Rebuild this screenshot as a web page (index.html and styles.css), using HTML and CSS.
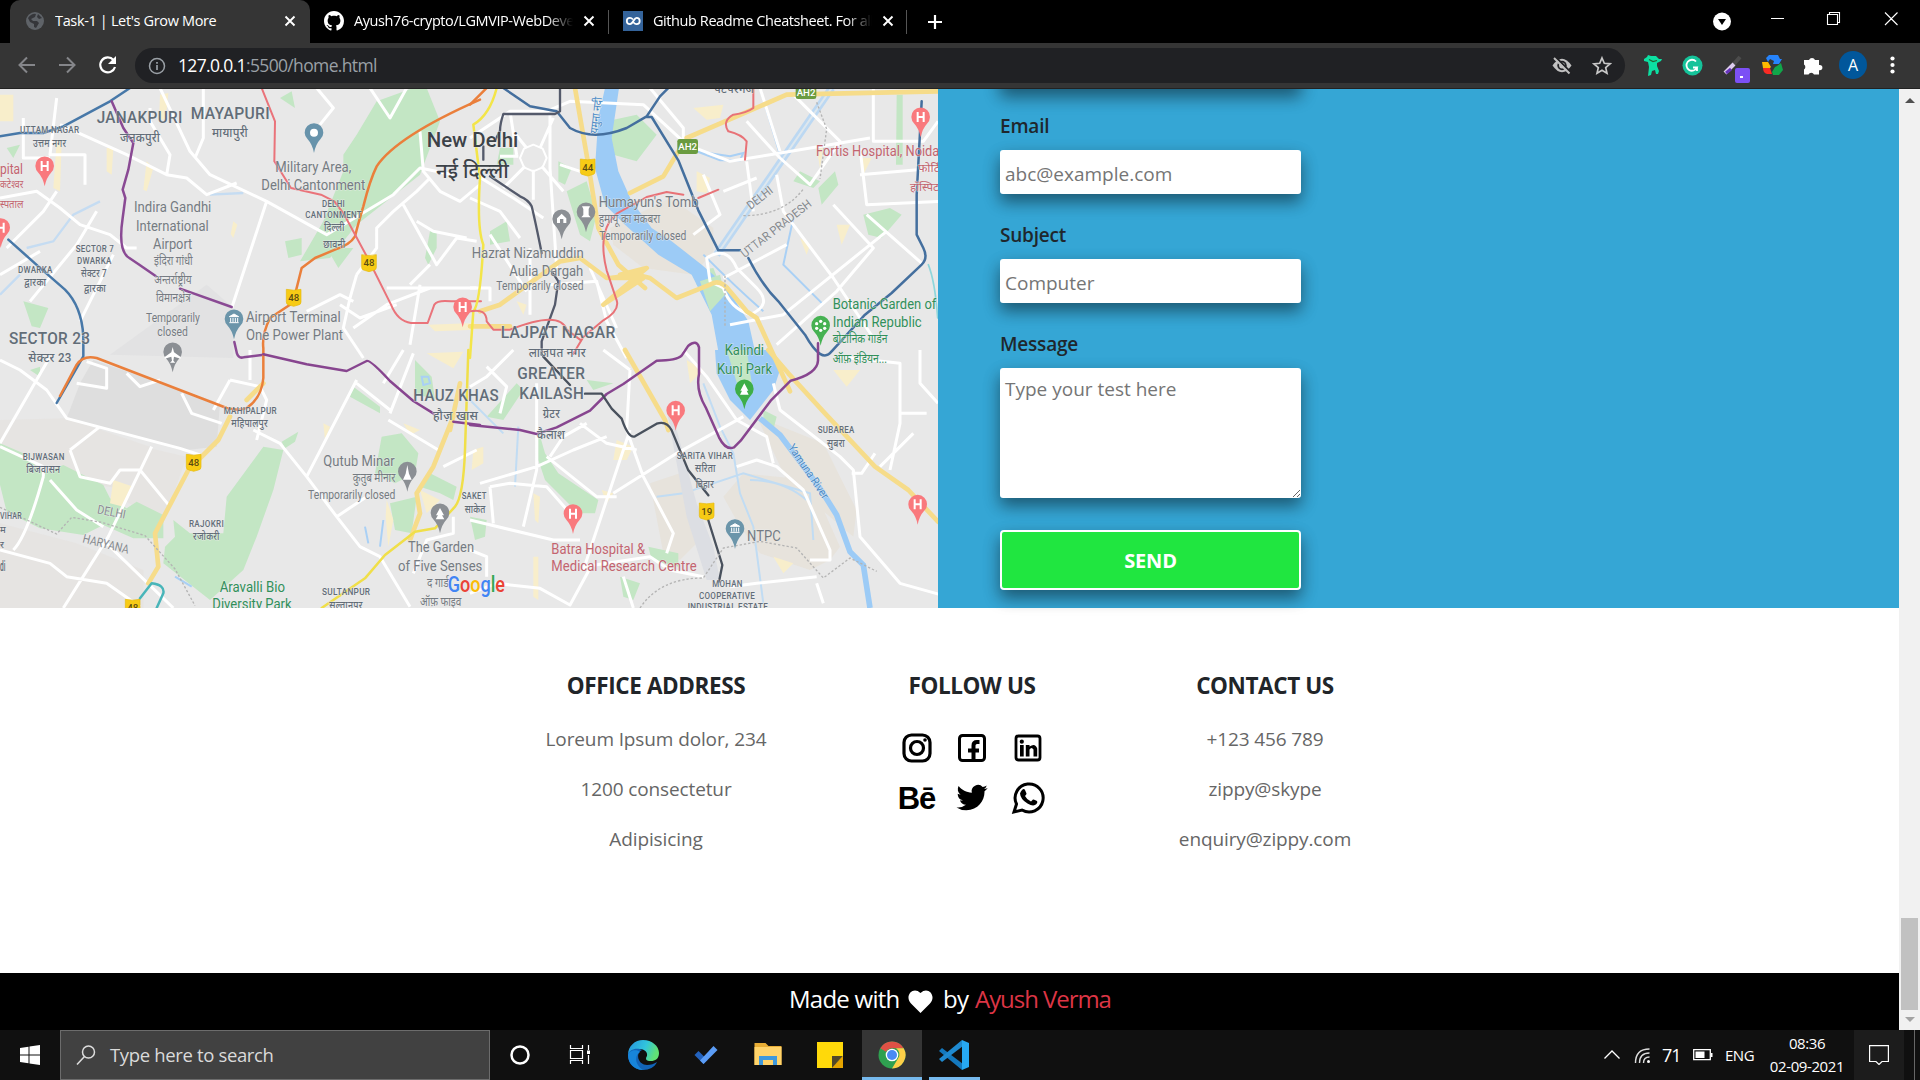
FILE: index.html
```html
<!DOCTYPE html>
<html lang="en">
<head>
<meta charset="utf-8">
<title>Task-1 | Let's Grow More</title>
<link rel="stylesheet" href="styles.css">
</head>
<body>
<div class="screen">
  <header class="tabstrip">
    <div class="tab tab-active">
      <svg class="ic20" viewBox="0 0 20 20"><circle cx="10" cy="10" r="9" fill="#5f6368"/><path d="M3 7q4-5 8-4l-1 3-4 2 2 2h4l2 2-3 5-2-1v-3l-4-2zM13 3l4 4-3 1-2-2z" fill="#35363a"/></svg>
      <span class="tab-title t1">Task-1 | Let's Grow More</span>
      <svg class="x" viewBox="0 0 12 12"><path d="M1.500 1.500l9 9M10.500 1.500l-9 9"/></svg>
    </div>
    <div class="tab tab-git">
      <svg class="ic20" viewBox="0 0 16 16"><path fill="#fff" d="M8 0C3.580 0 0 3.580 0 8c0 3.540 2.290 6.530 5.470 7.590.4.070.55-.17.55-.38 0-.19-.01-.82-.01-1.490-2.010.37-2.530-.49-2.690-.94-.09-.23-.48-.94-.82-1.130-.28-.15-.68-.52-.01-.53.63-.01 1.080.58 1.230.82.72 1.210 1.870.87 2.330.66.070-.52.280-.87.51-1.070-1.780-.2-3.640-.89-3.640-3.950 0-.87.310-1.590.820-2.150-.08-.2-.36-1.020.080-2.120 0 0 .67-.21 2.200.82.64-.18 1.320-.27 2-.27s1.360.090 2 .27c1.530-1.040 2.200-.82 2.200-.82.44 1.100.160 1.920.080 2.120.51.560.820 1.270.820 2.150 0 3.070-1.870 3.750-3.650 3.950.290.250.540.730.540 1.480 0 1.070-.01 1.930-.01 2.200 0 .210.150.460.550.380A8.010 8.010 0 0016 8c0-4.420-3.580-8-8-8z"/></svg>
      <span class="tab-title t2">Ayush76-crypto/LGMVIP-WebDevelopment</span>
      <svg class="x" viewBox="0 0 12 12"><path d="M1.500 1.500l9 9M10.500 1.500l-9 9"/></svg>
    </div>
    <div class="tab tab-code">
      <svg class="ic20" viewBox="0 0 20 20"><path fill="#34639a" d="M0 0h20v20H0z"/><path d="M10 8.500Q8.500 6.800 7 6.800a3.200 3.200 0 000 6.400c3 0 4-6.400 6.500-6.400a3.200 3.200 0 010 6.400q-1.500 0-3-1.700" fill="none" stroke="#fff" stroke-width="1.800"/></svg>
      <span class="tab-title t3">Github Readme Cheatsheet. For all developers</span>
      <svg class="x" viewBox="0 0 12 12"><path d="M1.500 1.500l9 9M10.500 1.500l-9 9"/></svg>
    </div>
    <svg class="plus" viewBox="0 0 16 16"><path d="M8 1v14M1 8h14" stroke="#fff" stroke-width="2.200"/></svg>
    <div class="window-controls">
      <svg viewBox="0 0 190 43"><circle cx="14" cy="21.500" r="9" fill="#fff"/><path d="M10 19h8l-4 6z" fill="#000"/><path d="M63 18.500h13M119.500 14.500h10v10h-10zM121.500 14v-1.500h10v10H130M177 12.500l12.500 12.500M189.500 12.500L177 25" fill="none" stroke="#fff" stroke-width="1.100"/></svg>
    </div>
  </header>
  <nav class="toolbar">
    <svg class="nav-icons" viewBox="0 0 135 45"><g fill="none" stroke-width="2"><path d="M35 22H20M27 14.500L19.500 22l7.500 7.500M59 22h15M67 14.500l7.500 7.500-7.500 7.500" stroke="#85868a"/><path d="M113.500 17a7.500 7.500 0 101.500 7" stroke="#fff" stroke-width="2.200"/></g><path d="M116 13v8h-8z" fill="#fff"/></svg>
    <div class="omnibox">
      <svg class="info" viewBox="0 0 18 18"><circle cx="9" cy="9" r="7.500" fill="none" stroke="#9aa0a6" stroke-width="1.500"/><path d="M9 8v5M9 5v1.700" stroke="#9aa0a6" stroke-width="1.700"/></svg>
      <span class="url"><b>127.0.0.1</b>:5500/home.html</span>
      <svg class="omni-icons" viewBox="0 0 60 35"><g transform="translate(10 17.500)"><path d="M-9.500 0Q0-13.500 9.500 0 0 13.500-9.500 0z" fill="#c0c0c0"/><circle r="4.700" fill="#202124"/><circle r="2.900" fill="#c0c0c0"/><path d="M-6.500-8.500L9.500 7.500" stroke="#202124" stroke-width="2"/><path d="M-8-7.500L7.500 8" stroke="#c0c0c0" stroke-width="1.900"/></g><path transform="translate(50 18)" d="M0-8l2.300 5.300 5.800.5-4.400 3.800 1.300 5.700L0 4.300l-5 3 1.300-5.700-4.400-3.800 5.800-.5z" fill="none" stroke="#c8c8c8" stroke-width="1.700"/></svg>
    </div>
    <svg class="ext-icons" viewBox="1625 43 295 45">
      <path d="M1644 59l3-2 1-2 3 1 5 0 3 3 3 0-1 2-4 2v3l2 5-1 3-2 0-1-4-3 1-1 4-3 1 1-9-1-5-4-1z" fill="#0ce0a2"/><path d="M1649 59.500l4 2 4-1" stroke="#263" stroke-width="1.200" fill="none"/>
      <circle cx="1692.500" cy="65.500" r="10" fill="#15c39a"/><path d="M1696 61.500a5.500 5.500 0 101 6h-4M1697 67v4" fill="none" stroke="#fff" stroke-width="1.800"/>
      <path d="M1740 57l-7 8" stroke="#4c4c4c" stroke-width="4"/><path d="M1734 64l-9 9" stroke="#dce" stroke-width="4"/><path d="M1731 69l-5 4" stroke="#63b" stroke-width="3"/><rect x="1735" y="68" width="15" height="15" rx="2" fill="#7c50f5"/><path d="M1740 76h3v2h-3z" fill="#fff"/>
      <path d="M1766 58l3-3h9l2 4 2 0-3 5h-6l1-3-4-2-2 3z" fill="#2684fc"/><path d="M1762 62l6 0 3 5-1 1h-7z" fill="#ffba00"/><path d="M1763 68h7l2 6h-5q-4-1-4-6z" fill="#f92b24"/><path d="M1777 66l4-3 2 7-4 5h-6l-1-3 3-5z" fill="#11a64a"/>
      <path d="M1804 60h5a3.200 3.200 0 016 0h4v5h.8a2.600 2.600 0 010 5.200h-.8v4.300h-5a3 3 0 00-5.500 0H1804v-5a3 3 0 000-5z" fill="#fff"/>
      <circle cx="1853" cy="65" r="14" fill="#01579b"/><text x="1853" y="71" class="avatar">A</text>
      <g fill="#fff"><circle cx="1892.500" cy="58.500" r="2.100"/><circle cx="1892.500" cy="65" r="2.100"/><circle cx="1892.500" cy="71.500" r="2.100"/></g>
    </svg>
  </nav>
  <div class="viewport">
    <main class="page">
      <section class="contact">
        <svg class="map" viewBox="0 0 2814 1557" preserveAspectRatio="none">
          <defs>
            <g id="drop"><path d="M0 88Q-5 62-19 47a28 28 0 1138 0Q5 62 0 88z"/></g>
            <g id="hosp"><use href="#drop" fill="#f9797d"/><path d="M-9 12v30M9 12v30M-9 27H9" stroke="#fff" stroke-width="6"/></g>
            <g id="bank"><use href="#drop" fill="#6b95aa"/><path d="M-14 20L0 12l14 8zM-10 24v12M-3 24v12M4 24v12M11 24v12M-14 38h28" stroke="#fff" stroke-width="3" fill="#fff"/></g>
            <g id="grey"><use href="#drop" fill="#8b8f94"/></g>
            <path id="shield" d="M-22-24q22 5 44 0v38q0 8-8 9l-14 4-14-4q-8-1-8-9z" fill="#f7cb15" stroke="#e5b90c" stroke-width="2"/>
          </defs>
          <path d="M0 0h2814v1557H0z" fill="#e8e8e8"/>
          <!-- terrain, upper half -->
          <g transform="translate(0 -3)">
            <path d="M330 800L620 590 700 660 700 810z" fill="#e2e2e3"/>
            <path d="M1130 40l110-40h40l40 100-60 160-190 150-80 100-90 10 70-120 60-150 0-50 40-60z" fill="#c3e6c4"/>
            <path d="M980 480l80 0-45 60zM1290 430l20 0 0 50-25 50-10-20zM855 460l50-10 0 50-40 10zM70 640l75 20-25 60-25-5zM840 30l35-20 10 50zM20 180l40-10-20 40z" fill="#c3e6c4"/>
            <path d="M320 180l20 0-5 80-15-10zM170 160l15 0-5 150-20-10zM440 220l20 20-20 70-10-5zM700 400l12 10-12 40-8-12zM0 20l40 0v80H0zM480 20l25-5-8 75-20 10zM1285 710l140-5 0 20-120 5z" fill="#f8eecb"/>
            <path d="M0 620L60 560M80 480l80-20 60-80 80-40M630 320l100-5" stroke="#c5dcf2" stroke-width="7" fill="none"/>
          </g>
          <g transform="translate(1410 -3)">
            <path d="M420 420l180-90 130 90 0 70-60 70-150-20-90-70z" fill="#e7e3dc"/>
            <path d="M410 100l90-20 60 60-60 80-70-20zM290 310l60-30 30 100-20 80-30-20zM60 430l50-30 10 60-60 10zM1180 380l80-20 35 20-60 70-40-10zM1045 300l50-50 10 40-50 60zM670 550l60-10 20 50-30 50-40-50zM265 220l40 20-20 50-20-10zM1280 20h18v210h-20zM990 250l60 30-20 20-60-20zM90 180l40 0v50H80z" fill="#c3e6c4"/>
            <path d="M405 0l-20 90-10 150 30 110 60 60 100 90 100 60 60 120 20 110h110l-20-90-70-110-70-60-90-70-60-40-60-80-40-90-20-100 25-170z" fill="#9ccbf6"/>
            <path d="M690 580l60-20 15 60-45 50z" fill="#c3e6c4"/>
            <path d="M1085 0L740 500" stroke="#bcd8f2" stroke-width="22"/><path d="M1085 0L740 500" stroke="#dde7ee" stroke-width="6"/>
            <path d="M680 190l100 15 40-10-10 22-60 0zM870 0l60 200M700 500q100 100 180 170M970 390l-30 140 120 120" fill="none" stroke="#a9d0f5" stroke-width="6"/>
            <path d="M670 60l90-10-10 40-40 5zM680 250l40 20-10 45-30-5zM1170 210l35 0-25 50zM990 450l30 20-10 30zM1100 410l40 0-25 60zM140 640l30 10-10 30zM1040 180l20 0-10 60z" fill="#f8eecb"/>
          </g>
          <!-- terrain, lower half -->
          <g transform="translate(0 783)">
            <path d="M240 100L280 30 660 160 650 290 560 300 200 205z" fill="#dedede"/>
            <path d="M0 520l230 60 200 80 0 114H0zM430 290l130 30-70 200-120-70zM0 210l200-5 250 85-60 130-200-30-190-50z" fill="#e5e3df" opacity=".7"/>
            <path d="M0 280l70 30 60 60 60 -25 120 60 20 40 50 30 30-20 80 40 0 70-90 0-90-40-60 30-130-20-100-50-20-80z" fill="#c3e6c4"/>
            <path d="M790 290l60 10-30 120-50 140-40 100-100 90-140-110 5-50 30-30-5-50 50 40 100 0 10-110z" fill="#c3e6c4"/>
            <path d="M845 275l50-30-10 30-30 20zM1145 260l60-10 50 60-10 60-60 30-60-30zM1290 370l80 40-10 40-40-20-60-20zM1170 460l80-20-15 110-50-10zM1060 110l80 60 0 20-90-50zM1245 30l50 50 10 70-60-20zM90 60l30-10 0 30z" fill="#c3e6c4"/>
            <path d="M340 390l60 20-30 60-40-10zM970 220l20 10-15 40zM1210 220l50 20-30 15zM1280 10l110-5-30 50zM1160 450l20 60-15 80-8-90zM1260 420l60 30-40 40z" fill="#f8eecb"/>
            <path d="M1265 80l20 0 5 20-20 5zM1095 530l10 50M1150 510l-10 80M525 680l50 30" fill="none" stroke="#a9d0f5" stroke-width="6"/>
          </g>
          <g transform="translate(1410 783)">
            <path d="M820 370l200 20 90 200-30 40-60 30-150-50-60-80-50-90zM540 400l90-30 60 200-60 60-50-20zM860 200l200 80 100 200-10 80-200-170z" fill="#e7e3dc"/>
            <path d="M205 240l20 70 40 60 120 80-10 40-50 0-100-100-20-60zM350 90l80 10-60 20zM535 590l90 20 0 40-80-20zM450 680l60 20-20 50-30-10zM0 500l50 10-5 50-30 10zM50 200l90-100 20 20-60 90zM880 180l40 20-10 40-30-20z" fill="#c3e6c4"/>
            <path d="M735 0h165l30 60-20 60-70 90-60-60-40-80z" fill="#9ccbf6"/><path d="M770 0h60l20 130-40 0z" fill="#c3e6c4"/>
            <path d="M870 205l60 50 120 160 50 80 40 110 40 40 20 129" fill="none" stroke="#9ccbf6" stroke-width="17"/>
            <path d="M700 100l50 130 40 80 20 120 40 100 30 230M560 440l80-10 180-60 200 60 10 140M840 390q100 0 170 60M145 230l-10 180M0 150l100 100" fill="none" stroke="#c1dcf3" stroke-width="6"/>
            <path d="M590 180l30 160 30 160 60 190h40l-20-100-50-130-60-220z" fill="#dcdee3"/>
            <path d="M10 300l30-10 0 50-35 20zM440 270l50 20-20 40-40 0zM395 420l35 10-20 30zM190 430l20 10-5 80-10-10zM910 620l60 20-30 30zM1090 60l80 0-40 50zM650 30l50 30-40 40zM190 620l15 0 0 130-15-10z" fill="#f8eecb"/>
          </g>
          <!-- streets -->
          <g fill="none" stroke="#fff" stroke-width="9" stroke-linejoin="round">
            <g transform="translate(0 -3)">
              <path d="M180 110l200 90 120 60 60 10 60 50 90-35M480 0l90 190 60 70 170 80 180 100 200-120 80-80 100 20M800 340L695 660M610 0v150l-25 60M950 0l50 60-40 50M1110 0l60 90 50-90M500 260l10-60-60-100 0-40"/>
              <path d="M0 330l110-20 70 50 60 50 90 30 50 40 30 0M20 480l110-110 40-60M90 640l140-170 60-100M240 700l100-200M170 30L150 200h105v90M70 90v120h80M0 560l120-70"/>
              <path d="M1060 640l-40-20-100 50M1070 560l-20 70-20 90 60 90M1070 560l60-80 0-60 50-50M1020 650l60 40 110-40M1160 600h270M1180 370l70-60 40-40M1260 130l10 120 50 60 60 30 60-50M1250 400l50 30 100 20M1290 530l-60 60M1210 350l100 180 60-80 60 10M1260 590l-30 180M1060 720l100-70 130-50"/>
            </g>
            <g transform="translate(1410 -3)">
              <path d="M0 150l120-80 110 0 70-30 220 10 130 120 130 50 120-20 300-50M120 70l20 130M145 205H90M190 245v90M165 235L100 300M215 235l65 75M210 180l40-90M170 180l-40-50M240 80l0 160 20 300M0 330l90 40 60 80M0 250l130 80 90 60M270 230l60 20M540 0l100 120 0 60M830 100l100 110 90 80 90-130L970 20M830 220l20 150M700 260l50 120-80 60M760 310l100-40"/>
              <path d="M190 170l28 12 12 28-12 28-28 12-28-12-12-28 12-28z" stroke-width="6"/>
              <path d="M1210 0v160l150 0 44-60M1170 260l234-20M1170 180l20 170 234-10M920 260l20 110 150 200 120 180M1090 350l120 130-110 130-180 160M1190 380l170 150M950 470L760 570M1250 430L940 680 780 710M710 510q60-40 90 30l60 60q50 50-20 80-60-20-80-80l-40-20zM0 600l60 0 0 40M240 590l140-10 30 120 60 110M360 540l80 180M180 480v200M60 440l110 170M870 0l60 190"/>
            </g>
            <g transform="translate(0 783)">
              <path d="M0 30l60 30 80 60 60 85 340 90 60 20M0 280L150 20M230 100l90 15 0-60-60-20M380 70l40 40 60-20M545 130l30 60 90 30M690 90l-50 90M690 90l90 20 20 40-30 120M760 240l80 40 80 100 90 120 70 90 60 30 90 150M750 0v90M1070 90L920 380M1240 10l-70 180M1165 210l150 90M1070 100l100 80M130 380l0-30M130 380q-50 180-90 220M455 290l-130 270L190 774M0 600l150 40 50 40 120 20 100 70M320 580l200 194M150 390l80 90 80 50M0 290l130 60M210 300l90-70M210 300l30 80 90 20 30-40 60 0 90 110M1010 500l90-60M1360 500l0 50-80 20-40 100M1330 350l100-50M1150 100l60-100"/>
            </g>
            <g transform="translate(1410 783)">
              <path d="M0 110l50-30 80-80M30 400l170-50 110-50 100-40M60 410l60-10 110 10 70 80M200 100v260l-40 170M0 510l250 60 80 0M60 410l10 110M480 60l-10 180 50 140 90 170-20 60M340 660l60-180 80-240M430 430l190-120 200-110M230 320l100 80 50 40 60 0M240 320l40-60 70-40M330 220l80 60 90 20M640 0l70 80 90 130 90 50 20 80M800 350l60-20 60 20 80 70 80 180 0 30-60 0M910 100l20 80 180 140 40 40 20 200 120 140 124 35M1145 370h30l40-60M1260 360l30-140 0-50M1110 20l180 20v150l80 0M1350 0v100l54 60M1230 350l100-100M0 600l50 20v60M0 730l80-30 130 15 90 50 60-110M340 650l200-30 60 40 100 20M460 680l30 94M1040 680l-180 20-80 10M1040 700l20 60M480 60L400 0M50 50l60 60-20 80"/>
            </g>
          </g>
          <!-- highways -->
          <g fill="none" stroke="#f6dc8a" stroke-width="14" stroke-linejoin="round" stroke-linecap="round">
            <g transform="translate(1410 -3)"><path d="M315 0l40 230 30 190 60 110 80 70"/><path d="M0 715h120M420 570l80-10 40 10 80 60 100-40q30-20 60 20l50 60 30 20 100 220M650 150l300-130 454-10M640 165l-60 100-100 50M30 670l60-20 180-130 60-10 80 60 110 0-120 80 130-110-80 20"/></g>
            <g transform="translate(1410 783)"><path d="M465 0l120 210 10 30M895 0l60 70 110 120 150 160 100 70 89 95"/></g>
            <g transform="translate(0 783)"><path d="M690 200l-35 70-90 90-100 190 10 100-30 50M740 150l50-50M1360 200l-60 150-50 80 10 60-30 80M1380 100l-30 140"/></g>
          </g>
          <!-- transit lines -->
          <g fill="none" stroke-width="7.500" stroke-linejoin="round" stroke-linecap="round">
            <g transform="translate(0 -3)">
              <path d="M0 145l60-10 70 0 60-20 140-75 60-40M25 455l90 80 80 70q50 50 55 140v60l-80 140" stroke="#4778a8"/>
              <path d="M335 40l35 80 30 45-15 80-17 60 8 25-8 60q-15 100 20 120l30 20 50 35M540 602l155 55M703 762l8 35q5 15 20 11l60-8" stroke="#8a4a94"/>
              <path d="M1440 35q-250 110-310 200-20 40-40 120-15 50-25 90-15 25-60 40l-60 25-40 30-20 80M870 650l-60 40q-25 50-20 90l0 90q-5 60-50 90-20 10-60 0L290 810q-40-10-60 20l-50 94" stroke="#ea7f3b"/>
              <path d="M785 0l40 100-2 120 50 80 90 20 40 20 30 40 70 130 70 140q20 50 60 55l50 0 20-55q10-15 50-10h90" stroke="#ea737a" stroke-width="6"/>
            </g>
            <g transform="translate(1410 -3)">
              <path d="M100 0l80 55 80 15 40 50q70 40 170 0l60-35 40-60 25-25M530 87h15l80 130 60 150 60 120h65M835 510q40 80 90 130l80 100q50 90 80 50l100-110 80-65 90-85q20-20 5-50l-20-40V320l15-280" stroke="#446f9e"/>
              <path d="M270 0v70l-15 8H100q-10 30-10 50l-15 30M40 175v40M60 265l90 60q25 10 35 30 10 40 30 140M245 550l20 30-10 70-40 110 0 40" stroke="#545a6b" stroke-width="7"/>
              <path d="M80 0q-20 80-70 110l20 160q-10 150 10 200-10 180-30 200L0 810" stroke="#f3e549"/>
              <path d="M0 50L50 0" stroke="#ea7f3b"/><path d="M850 0v60q-20 15-60 20-35 20-15 50 40 10 55 30l-5 55M745 305l-60 25M640 320l-50-8-60 15-90 50q-60 50-30 170l30 90q10 30-40 60l-60 50-30 50M0 670q50-10 50 30l20 25 50 0q150-60 170 0l40 30" stroke="#e87277" stroke-width="6"/>
              <path d="M1375 530q20 50 28 160" stroke="#8ed6db" stroke-width="5"/>
            </g>
            <g transform="translate(0 783)">
              <path d="M790 13l130 30 120 20q40-20 60-30 10-5 70 60l70 60 60 37M1360 215l80 10" stroke="#87458f"/>
              <path d="M1405 0l-10 300q-5 140-30 170l-60 65-60 10-90 70-60 70-130 89" stroke="#f0df49"/>
              <path d="M420 745l35-45q40 5 35 30l-20 44" stroke="#48b5b9"/>
            </g>
            <g transform="translate(1410 783)">
              <path d="M0 225l150 15 50 12 60-20 100-50 50-50 50-30 100-70q60 0 75-15l20-30q25-20 32 5l0 80q-10 50 20 100l40 90q20 40 45 30l20-20 90-120 60-60q80-20 82-60V-20" stroke="#87458f"/>
              <path d="M220 20l80 85M345 131h50l30 45 30 30q20 60 40 53l65-38q30-10 45 20l50 120 60 75M710 495l47 150-10 50" stroke="#49515d" stroke-width="7"/>
            </g>
          </g>
          <g fill="none" stroke="#b4b4b4" stroke-width="4" stroke-dasharray="7 6"><path d="M0 1255l170 80 45-50 90 15 130 40 90 100 60 110M2450 40l30 80-20 150M2230 380q120 0 180-80M1920 1557q60-90 190-90l60-90 110-20 110 20 80 90 80-60 80 40M2175 560v150"/></g>
          <!-- markers -->
          <g transform="translate(0 -3)"><use href="#hosp" x="134" y="207"/><use href="#hosp" x="2" y="392"/><use href="#bank" x="702" y="666"/><use href="#drop" x="942" y="107" fill="#6793ab"/><circle cx="942" cy="134" r="12" fill="#fff"/><use href="#hosp" x="1388" y="630"/><use href="#grey" x="518" y="765"/><path d="M518 777l4 16 20 14v5l-20-6-2 12 6 6h-16l6-6-2-12-20 6v-5l20-14z" fill="#fff"/></g>
          <g transform="translate(1410 -3)"><use href="#hosp" x="1352" y="60"/><use href="#grey" x="275" y="366"/><path d="M261 405v-14l8-8 6-6 6 6 8 8v14h-9v-12h-10v12z" fill="#fff"/><use href="#grey" x="348" y="345"/><path d="M336 355h24l-4 8v18l6 7h-28l6-7v-18z" fill="#fff"/><use href="#drop" x="1052" y="685" fill="#46b252"/><g fill="#fff"><circle cx="1052" cy="700" r="5"/><circle cx="1040" cy="707" r="5"/><circle cx="1064" cy="707" r="5"/><circle cx="1040" cy="721" r="5"/><circle cx="1064" cy="721" r="5"/><circle cx="1052" cy="727" r="5"/></g></g>
          <g transform="translate(0 783)"><use href="#grey" x="1222" y="337"/><path d="M1222 345l5 26 8 18h-26l8-18z" fill="#fff"/><use href="#grey" x="1320" y="462"/><path d="M1320 474l12 22h-6l7 12h-26l7-12h-6z" fill="#fff"/></g>
          <g transform="translate(1410 783)"><use href="#hosp" x="617" y="154"/><use href="#hosp" x="309" y="464"/><use href="#hosp" x="1343" y="436"/><use href="#bank" x="795" y="509"/><use href="#drop" x="823" y="90" fill="#3eae48"/><path d="M823 100l12 22h-5l6 12h-26l6-12h-5z" fill="#fff"/></g>
          <g class="road-no"><use href="#shield" x="1107" y="521"/><text x="1107" y="530">48</text><use href="#shield" x="881" y="625"/><text x="881" y="636">48</text><use href="#shield" x="581" y="1120"/><text x="581" y="1131">48</text><use href="#shield" x="398" y="1555"/><text x="398" y="1566">48</text><use href="#shield" x="1763" y="234"/><text x="1763" y="245">44</text><use href="#shield" x="2120" y="1266"/><text x="2120" y="1277">19</text></g>
          <g class="asian-no"><rect x="2032" y="150" width="62" height="45" rx="7"/><rect x="2387" y="-10" width="62" height="40" rx="7"/><text x="2063" y="183">AH2</text><text x="2418" y="22">AH2</text></g>
          <!-- labels -->
          <g transform="translate(0 -3)" class="lbl">
            <g class="area"><text x="290" y="106" font-size="50" textLength="258">JANAKPURI</text><text x="572" y="93" font-size="50" textLength="238">MAYAPURI</text><text x="360" y="162" font-size="38" textLength="120">जनकपुरी</text><text x="636" y="147" font-size="38" textLength="108">मायापुरी</text><text x="60" y="136" font-size="29" textLength="178">UTTAM NAGAR</text><text x="99" y="176" font-size="31" textLength="100">उत्तम नगर</text><text x="227" y="493" font-size="29" textLength="115">SECTOR 7</text><text x="231" y="528" font-size="29" textLength="104">DWARKA</text><text x="243" y="568" font-size="31" textLength="78">सेक्टर 7</text><text x="252" y="613" font-size="31" textLength="66">द्वारका</text><text x="54" y="555" font-size="29" textLength="104">DWARKA</text><text x="73" y="594" font-size="31" textLength="66">द्वारका</text><text x="27" y="767" font-size="50" textLength="244">SECTOR 23</text><text x="966" y="357" font-size="29" textLength="69">DELHI</text><text x="916" y="391" font-size="29" textLength="170">CANTONMENT</text><text x="972" y="430" font-size="31" textLength="62">दिल्ली</text><text x="970" y="479" font-size="31" textLength="66">छावनी</text></g>
            <g class="city"><text x="1280" y="177" font-size="62" textLength="275">New Delhi</text><text x="1308" y="269" font-size="64" textLength="218">नई दिल्ली</text></g>
            <g class="poi"><text x="826" y="251" font-size="46" textLength="228">Military Area,</text><text x="784" y="305" font-size="46" textLength="312">Delhi Cantonment</text><text x="402" y="373" font-size="46" textLength="232">Indira Gandhi</text><text x="408" y="428" font-size="46" textLength="218">International</text><text x="459" y="483" font-size="46" textLength="118">Airport</text><text x="462" y="531" font-size="37" textLength="116">इंदिरा गांधी</text><text x="463" y="587" font-size="37" textLength="112">अन्तर्राष्ट्रीय</text><text x="468" y="643" font-size="37" textLength="104">विमानक्षेत्र</text><text x="438" y="701" font-size="36" textLength="162">Temporarily</text><text x="472" y="745" font-size="36" textLength="92">closed</text><text x="738" y="701" font-size="46" textLength="284">Airport Terminal</text><text x="738" y="755" font-size="46" textLength="291">One Power Plant</text></g>
            <g class="hospital"><text x="0" y="257" font-size="46" textLength="69">pital</text><text x="0" y="301" font-size="34" textLength="70">कटेश्वर</text><text x="0" y="361" font-size="34" textLength="70">स्पताल</text></g>
          </g>
          <g transform="translate(1410 -3)" class="lbl">
            <g class="poi"><text x="386" y="357" font-size="46" textLength="300">Humayun's Tomb</text><text x="386" y="405" font-size="37" textLength="184">हुमायू का मकबरा</text><text x="388" y="456" font-size="36" textLength="261">Temporarily closed</text><text x="5" y="509" font-size="46" textLength="336">Hazrat Nizamuddin</text><text x="118" y="564" font-size="46" textLength="222">Aulia Dargah</text><text x="79" y="607" font-size="36" textLength="262">Temporarily closed</text></g>
            <g class="area"><text x="92" y="749" font-size="50" textLength="345">LAJPAT NAGAR</text><text x="176" y="807" font-size="38" textLength="172">लाजपत नगर</text><text x="733" y="14" font-size="34" textLength="120">पटपरगंज</text></g>
            <g class="state"><text transform="translate(842 366) rotate(-38)" font-size="36" textLength="88">DELHI</text><text transform="translate(824 511) rotate(-38)" font-size="36" textLength="258">UTTAR PRADESH</text></g>
            <text class="river" transform="translate(383 138) rotate(-83)" font-size="34" textLength="110">यमुना नदी</text>
            <g class="hospital"><text x="1038" y="203" font-size="46" textLength="370">Fortis Hospital, Noida</text><text x="1344" y="251" font-size="34" textLength="90">फोर्टिस</text><text x="1320" y="309" font-size="34" textLength="110">हॉस्पिटल</text></g>
            <g class="park"><text x="1088" y="663" font-size="46" textLength="311">Botanic Garden of</text><text x="1088" y="717" font-size="46" textLength="267">Indian Republic</text><text x="1088" y="765" font-size="37" textLength="164">बोटानिक गार्डन</text><text x="764" y="801" font-size="46" textLength="118">Kalindi</text></g>
          </g>
          <g transform="translate(0 783)" class="lbl">
            <g class="area"><text x="85" y="37" font-size="38" textLength="130">सेक्टर 23</text><text x="671" y="191" font-size="29" textLength="160">MAHIPALPUR</text><text x="694" y="231" font-size="31" textLength="110">महिपालपुर</text><text x="68" y="330" font-size="29" textLength="126">BIJWASAN</text><text x="79" y="370" font-size="31" textLength="102">बिजवासन</text><text x="567" y="531" font-size="29" textLength="105">RAJOKRI</text><text x="579" y="571" font-size="31" textLength="80">रजोकरी</text><text x="0" y="506" font-size="29" textLength="66">VIHAR</text><text x="0" y="548" font-size="28">म</text><text x="0" y="595" font-size="28">र</text><text x="0" y="663" font-size="44" textLength="17">di</text><text x="1240" y="153" font-size="50" textLength="257">HAUZ KHAS</text><text x="1299" y="211" font-size="38" textLength="136">हौज़ खास</text><text x="1385" y="448" font-size="29" textLength="75">SAKET</text><text x="1394" y="489" font-size="31" textLength="63">साकेत</text><text x="966" y="735" font-size="29" textLength="145">SULTANPUR</text><text x="988" y="776" font-size="31" textLength="100">सुल्तानपुर</text></g>
            <g class="state"><text transform="translate(290 490) rotate(11)" font-size="37" textLength="86">DELHI</text><text transform="translate(246 577) rotate(14)" font-size="37" textLength="142">HARYANA</text></g>
            <g class="poi"><text x="970" y="347" font-size="46" textLength="214">Qutub Minar</text><text x="1058" y="396" font-size="37" textLength="128">कुतुब मीनार</text><text x="924" y="447" font-size="36" textLength="262">Temporarily closed</text><text x="1224" y="607" font-size="46" textLength="198">The Garden</text><text x="1194" y="662" font-size="46" textLength="253">of Five Senses</text><text x="1281" y="710" font-size="37" textLength="65">द गार्ड</text><text x="1260" y="767" font-size="37" textLength="124">ऑफ़ फाइव</text></g>
            <g class="park"><text x="659" y="725" font-size="46" textLength="196">Aravalli Bio</text><text x="637" y="778" font-size="46" textLength="238">Diversity Park</text></g>
            <text class="google" x="1343" y="727" font-size="68" textLength="172"><tspan fill="#4285f4">G</tspan><tspan fill="#ea4335">o</tspan><tspan fill="#fbbc05">o</tspan><tspan fill="#4285f4">g</tspan><tspan fill="#34a853">l</tspan><tspan fill="#ea4335">e</tspan></text>
          </g>
          <g transform="translate(1410 783)" class="lbl">
            <g class="area"><text x="142" y="88" font-size="50" textLength="204">GREATER</text><text x="148" y="147" font-size="50" textLength="194">KAILASH</text><text x="218" y="203" font-size="38" textLength="52">ग्रेटर</text><text x="201" y="268" font-size="38" textLength="84">कैलाश</text><text x="1043" y="248" font-size="29" textLength="111">SUBAREA</text><text x="1071" y="290" font-size="31" textLength="54">सुबरा</text><text x="620" y="327" font-size="29" textLength="169">SARITA VIHAR</text><text x="675" y="367" font-size="31" textLength="62">सरिता</text><text x="677" y="415" font-size="31" textLength="55">विहार</text><text x="727" y="711" font-size="29" textLength="91">MOHAN</text><text x="687" y="746" font-size="29" textLength="168">COOPERATIVE</text><text x="653" y="779" font-size="29" textLength="241">INDUSTRIAL ESTATE</text></g>
            <g class="park"><text x="741" y="71" font-size="46" textLength="165">Kunj Park</text><text x="1088" y="38" font-size="37" textLength="163">ऑफ़ इंडियन...</text></g>
            <g class="hospital"><text x="244" y="611" font-size="46" textLength="281">Batra Hospital &amp;</text><text x="244" y="664" font-size="46" textLength="436">Medical Research Centre</text></g>
            <text class="poi" x="831" y="573" font-size="46" textLength="101">NTPC</text>
            <text class="river" transform="translate(953 292) rotate(56)" font-size="34" textLength="190">Yamuna River</text>
          </g>
        </svg>
        <form class="form">
          <div class="field name"><input class="control" type="text"></div>
          <div class="field"><label class="label">Email</label><input class="control" type="text" placeholder="abc@example.com"></div>
          <div class="field"><label class="label">Subject</label><input class="control" type="text" placeholder="Computer"></div>
          <div class="field field-message"><label class="label">Message</label><textarea class="control area-box" placeholder="Type your test here"></textarea></div>
          <button class="send" type="button">SEND</button>
        </form>
      </section>
      <section class="info-row">
        <div class="col col-office"><h3>OFFICE ADDRESS</h3><p>Loreum Ipsum dolor, 234</p><p>1200 consectetur</p><p>Adipisicing</p></div>
        <div class="col col-follow"><h3>FOLLOW US</h3>
          <div class="social">
            <svg viewBox="0 0 38 38"><g fill="none" stroke="#000"><rect x="6" y="6" width="26" height="26" rx="7.500" stroke-width="3.200"/><circle cx="19" cy="19" r="6.500" stroke-width="3.200"/></g><circle cx="27" cy="11" r="1.800"/></svg>
            <svg viewBox="0 0 38 38"><rect x="6.500" y="6.500" width="25" height="25" rx="3" fill="none" stroke="#000" stroke-width="3"/><path d="M26.500 13h-2.500q-3.500 0-3.500 3.500V32M15 21.500h11" fill="none" stroke="#000" stroke-width="4"/></svg>
            <svg viewBox="0 0 38 38"><rect x="7" y="7" width="24" height="24" rx="2.500" fill="none" stroke="#000" stroke-width="2.800"/><path d="M11 16h3.700v11.500H11zM16.800 16h3.700v1.500q5.700-4 7.700 2v8h-3.700V20.500q-2-3-4 0v7h-3.700z"/><circle cx="12.800" cy="12.700" r="2.100"/></svg>
            <span class="be">Bē</span>
            <svg viewBox="0 0 38 38"><path transform="translate(3.500 3) scale(1.300)" d="M23.950 4.570a10 10 0 01-2.820.775 4.960 4.960 0 002.160-2.720c-.95.555-2 .955-3.130 1.180a4.920 4.920 0 00-8.380 4.480C7.690 8.100 4.070 6.130 1.640 3.160a4.900 4.900 0 001.520 6.570 4.900 4.900 0 01-2.230-.61v.060a4.920 4.920 0 003.950 4.830 5 5 0 01-2.210.085 4.940 4.940 0 004.600 3.420A9.870 9.870 0 010 19.540a14 14 0 007.550 2.210c9.050 0 14-7.500 14-13.980 0-.21 0-.42-.015-.63a10 10 0 002.460-2.550z"/></svg>
            <svg viewBox="0 0 38 38"><path d="M5 33l2.500-8A14 14 0 1113 31z" fill="none" stroke="#000" stroke-width="3"/><path d="M13 11q2-2 3 0l1.500 3.500q0 1-1.500 2.500 2 4 6 5.500l2-2q1-.5 4 1.500 1 1-.5 3-3 3-9-.5-7-4-7.500-10 .5-2 2-3.500z"/></svg>
          </div>
        </div>
        <div class="col col-contact"><h3>CONTACT US</h3><p>+123 456 789</p><p>zippy@skype</p><p>enquiry@zippy.com</p></div>
      </section>
      <footer class="credit"><span class="made">Made with</span><svg viewBox="0 0 25 23"><path d="M12.500 23L3 13.500C-4 6 5-4.500 12.500 3 20-4.500 29 6 22 13.500z" fill="#fff"/></svg><span class="by">by</span><a class="author">Ayush Verma</a></footer>
    </main>
    <aside class="scrollbar"><i class="up"></i><i class="thumb"></i><i class="down"></i></aside>
  </div>
  <footer class="taskbar">
    <div class="start"><svg viewBox="0 0 20 20"><path fill="#fff" d="M0 3l8.500-1.200v7.700H0zM9.500 1.600L20 0v9.500H9.500zM0 10.500h8.500v7.700L0 17zM9.500 10.500H20V20L9.500 18.400z"/></svg></div>
    <div class="search"><svg viewBox="0 0 20 20"><circle cx="12.500" cy="7" r="6" fill="none" stroke="#ddd" stroke-width="1.500"/><path d="M8.500 11.500L1 19.500" stroke="#ddd" stroke-width="1.500"/></svg><span>Type here to search</span></div>
    <svg class="apps" viewBox="490 1030 490 50">
      <defs><linearGradient id="edge" x1="0" y1="0" x2="1" y2=".3"><stop offset="0" stop-color="#2591df"/><stop offset=".6" stop-color="#31c5dc"/><stop offset="1" stop-color="#61e174"/></linearGradient></defs>
      <circle cx="520" cy="1055" r="8.500" fill="none" stroke="#fff" stroke-width="2.500"/>
      <path d="M570.500 1045v3.500h12V1045M570.500 1064v-3.500h12v3.500M570.500 1050.500h12v8h-12zM588.500 1045v5M588.500 1055v9" fill="none" stroke="#fff" stroke-width="1.200"/><path d="M587 1050.500h3v3.500h-3z" fill="#fff"/>
      <path d="M628 1055c0-9 7-15 15-15 9 0 16 6 16 13 0 6-4 8-8 8-5 0-6-2-4-5 1-4-3-7-7-7-6 0-11 3-12 6z" fill="url(#edge)"/><path d="M628 1055c0-5 9-8 14-5-7 3-4 15 5 15 4 0 7-1 10-3-5 12-29 11-29-7z" fill="#1264b8"/><path d="M628 1055c1-5 9-6 12-3-5 3-6 12 3 18-9 0-15-7-15-15z" fill="#1785db"/>
      <path d="M694.500 1055l4-4 9 9-4 4z" fill="#2362bd"/><path d="M700 1060.500l13.500-14.500 4 4-14 14z" fill="#5b9cf5"/>
      <path d="M754.500 1043h11l3 3h13v19h-27z" fill="#e8ad35"/><path d="M754.500 1047h27v18h-27z" fill="#ffd36a"/><path d="M759 1065v-9h18v9h-4v-5h-10v5z" fill="#3e98dc"/>
      <path d="M817 1042h26v15l-11 11h-15z" fill="#ffd90a"/><path d="M832 1068v-12h11z" fill="#514829"/><path d="M832 1068l11-12v12z" fill="#e5a400"/>
      <path d="M862 1030h60v50h-60z" fill="#353535"/><path d="M862 1077h60v3h-60zM929 1077h51v3h-51z" fill="#76b9ed"/>
      <g transform="translate(892 1055)"><circle r="13.500" fill="#2fa050"/><path d="M-11.700-6.750A13.500 13.500 0 0111.700-6.750H0a7 7 0 00-6 3.500z" fill="#df5145"/><path d="M11.700-6.750A13.500 13.500 0 010 13.500L6 3.500A7 7 0 004-6.750z" fill="#fecf48"/><circle r="6.300" fill="#fff"/><circle r="5" fill="#4a8af4"/></g>
      <path d="M939 1051l3-3 21 16-1 6z" fill="#1478bd"/><path d="M939 1059l3 3 21-16-1-6z" fill="#1f8ad0"/><path d="M962 1040l7 3v24l-7 3z" fill="#27a8f2"/>
    </svg>
    <div class="tray">
      <svg class="tray-left" viewBox="1600 1030 60 50"><path d="M1604.500 1058.500l7.500-7.500 7.500 7.500" fill="none" stroke="#fff" stroke-width="1.300"/><g fill="none" stroke="#ddd" stroke-width="1.400"><path d="M1635.500 1063q0-14 14-14M1639.500 1063q0-10 10-10M1643.500 1063q0-6 6-6"/></g><circle cx="1648.500" cy="1061.500" r="1.500" fill="#fff"/></svg>
      <span class="percent">71</span>
      <svg class="battery" viewBox="0 0 20 12"><path d="M.7.7h16.600v10H.7z" fill="none" stroke="#fff" stroke-width="1.300"/><path d="M2.500 2.500h9v6.500h-9zM18 4h1.500v4H18z" fill="#fff"/></svg>
      <span class="lang">ENG</span>
      <div class="clock"><span>08:36</span><span class="date">02-09-2021</span></div>
      <div class="notify"><svg viewBox="0 0 20 20"><path d="M.6.6h18.800v15.900H13l-3 3-3-3H.6z" fill="none" stroke="#fff" stroke-width="1.200"/></svg></div>
      <div class="peek"></div>
    </div>
  </footer>
</div>
<script src="map.js"></script>
</body>
</html>
```
FILE: map.js
```js
// Condense map labels to their set length by scaling the glyphs, not the gaps.
document.querySelectorAll('.map text[textLength]').forEach(function (label) {
  label.setAttribute('lengthAdjust', 'spacingAndGlyphs');
});
```
FILE: styles.css
```css
* { box-sizing: border-box; }
body { margin: 0; background: #000; font-family: "Open Sans", "Noto Sans", sans-serif; }
svg { display: block; flex: none; }
.screen { width: 1920px; height: 1080px; display: flex; flex-direction: column; overflow: hidden; }

.tabstrip { height: 43px; flex: none; display: flex; align-items: center; background: #000; color: #fff; padding-left: 10px; }
.tab { height: 43px; display: flex; align-items: center; padding-left: 14px; padding-bottom: 1px; }
.tab-active { width: 300px; background: #353535; border-radius: 10px 10px 0 0; padding-left: 15px; }
.tab-git { width: 299px; border-right: 1px solid #555; height: 24px; }
.tab-code { width: 298px; border-right: 1px solid #555; height: 24px; }
.ic20 { width: 20px; height: 20px; }
.tab-title { font-size: 14.5px; line-height: 24px; letter-spacing: -.42px; white-space: nowrap; overflow: hidden; margin-left: 10px; width: 219px; }
.t2, .t3 { -webkit-mask-image: linear-gradient(90deg, #000 88%, transparent); mask-image: linear-gradient(90deg, #000 88%, transparent); }
.t1 { width: 218px; letter-spacing: -.35px; }
.x { width: 12px; height: 12px; margin-left: 10px; stroke: #fff; stroke-width: 1.9; }
.t1 + .x { margin-left: 11px; }
.plus { width: 16px; height: 16px; margin-left: 20px; }
.window-controls { margin-left: auto; width: 212px; }
.window-controls svg { width: 190px; height: 43px; }

.toolbar { height: 46px; flex: none; display: flex; background: #353535; border-bottom: 1px solid #222; }
.nav-icons { width: 135px; height: 45px; }
.omnibox { width: 1490px; height: 35px; margin-top: 5px; border-radius: 18px; background: #202124; display: flex; align-items: center; padding-left: 13px; }
.info { width: 18px; height: 18px; }
.url { margin-left: 12px; font-size: 17.5px; letter-spacing: -.65px; color: #9aa0a6; line-height: 33px; margin-top: -1px; }
.url b { font-weight: 400; color: #fff; }
.omni-icons { width: 60px; height: 35px; margin-left: auto; margin-right: 13px; }
.ext-icons { width: 295px; height: 45px; }
.avatar { font-size: 16px; fill: #fff; text-anchor: middle; }

.viewport { height: 941px; flex: none; display: flex; }
.page { width: 1899px; background: #fff; display: flex; flex-direction: column; }
.contact { height: 519px; flex: none; display: flex; background: #35a6d5; }
.map { width: 938px; height: 519px; overflow: hidden; }
.map text { font-family: Roboto, "Noto Sans", sans-serif; }
.lbl text { paint-order: stroke; stroke: #eee; stroke-width: 3px; stroke-opacity: .7; }
.area { fill: #626d78; font-weight: 500; letter-spacing: 1px; }
.city { fill: #3c4248; font-weight: 500; }
.poi { fill: #757b82; }
.state { fill: #85898e; }
.hospital { fill: #c3646f; }
.park { fill: #31905a; }
.river { fill: #4689c6; }
.google { font-weight: 500; }
.road-no text, .asian-no text { font-size: 29px; font-weight: 500; fill: #5b4c12; text-anchor: middle; }
.asian-no rect { fill: #6a9b40; }
.asian-no text { fill: #fff; }

.form { width: 301px; margin-left: 62px; display: flex; flex-direction: column; clip-path: inset(0 -60px -30px -60px); }
.field { height: 109px; flex: none; display: flex; flex-direction: column; padding-top: 14px; }
.field.name { height: 0; padding: 0; justify-content: flex-end; }
.field-message { height: 223px; }
.label { font-size: 19px; line-height: 28px; font-weight: 600; color: #1f272c; height: 47px; flex: none; padding-top: 9px; letter-spacing: -.2px; }
.control { width: 301px; height: 44px; flex: none; border: 0; border-radius: 3px; padding: 4px 5px 1px; font: 19px "Open Sans", sans-serif; background: #fff; box-shadow: 0 8px 16px rgba(0,0,0,.4), 0 6px 20px rgba(0,0,0,.1); outline: 0; }
.control::placeholder { color: #757575; opacity: 1; }
.area-box { height: 130px; padding-top: 8px; resize: vertical; }
.send { width: 301px; height: 60px; flex: none; border: 2px solid #fff; border-radius: 4px; background: #20e640; color: #fff; font: bold 20px "Open Sans", sans-serif; letter-spacing: -.2px; box-shadow: 0 8px 16px rgba(0,0,0,.4), 0 6px 20px rgba(0,0,0,.1); }

.info-row { height: 365px; flex: none; display: flex; padding: 64px 0 0 526px; text-align: center; }
.col-office { width: 260px; }
.col-follow { width: 180px; margin-left: 96px; }
.col-contact { width: 240px; margin-left: 83px; }
h3 { margin: 0; font-size: 22.5px; line-height: 28px; height: 30px; font-weight: 700; letter-spacing: -.4px; color: #212529; }
.col p { margin: 0; font-size: 19px; line-height: 50px; color: #666; letter-spacing: -.12px; }
.col h3 + p { margin-top: 12px; }
.social { display: grid; grid-template-columns: repeat(3, 38px); column-gap: 17.5px; row-gap: 12px; justify-content: center; margin-top: 27px; }
.social svg { width: 38px; height: 38px; }
.be { font: bold 31px/40px "Liberation Sans", sans-serif; letter-spacing: -1px; height: 38px; }

.credit { height: 57px; flex: none; display: flex; align-items: center; padding: 0 0 6px 789px; background: #000; color: #fff; font-size: 24px; letter-spacing: -.75px; }
.made { width: 110px; white-space: nowrap; }
.credit svg { width: 25px; height: 23px; margin: 6px 10px 0 9px; }
.by { width: 32px; }
.author { color: #dc3545; letter-spacing: -1.05px; }

.scrollbar { width: 21px; background: #f1f1f1; display: flex; flex-direction: column; align-items: center; padding-top: 9px; }
.scrollbar i { display: block; flex: none; }
.up { border: 5px solid transparent; border-top: 0; border-bottom-color: #505050; }
.thumb { width: 17px; height: 92px; background: #c1c1c1; margin-top: 815px; }
.down { border: 5px solid transparent; border-bottom: 0; border-top-color: #a3a3a3; margin-top: 7px; }

.taskbar { height: 50px; flex: none; display: flex; background: #101010; color: #fff; }
.start { width: 60px; padding: 15px 20px; }
.start svg { width: 20px; height: 20px; }
.search { width: 430px; display: flex; align-items: center; background: #414141; border: 1px solid #6c6c6c; padding-left: 15px; font-size: 18.5px; letter-spacing: -.35px; color: #dadada; }
.search svg { width: 20px; height: 20px; margin-right: 14px; }
.search span { margin-top: -2px; }
.apps { width: 490px; height: 50px; }
.tray { margin-left: auto; width: 320px; display: flex; align-items: center; font-size: 15px; }
.tray-left { width: 60px; height: 50px; }
.percent { width: 32px; padding-left: 2px; font-size: 18px; font-weight: 500; letter-spacing: -1px; }
.battery { width: 20px; height: 12px; margin-left: 1px; }
.lang { width: 43px; margin-left: 12px; letter-spacing: -.5px; }
.clock { width: 80px; display: flex; flex-direction: column; text-align: center; line-height: 23px; letter-spacing: -.4px; margin-left: -1px; }
.notify { width: 50px; height: 50px; margin-left: 7px; padding: 15px; background: #1c1c1c; }
.notify svg { width: 20px; height: 20px; }
.peek { width: 11px; height: 50px; border-right: 1px solid #666; }
```
